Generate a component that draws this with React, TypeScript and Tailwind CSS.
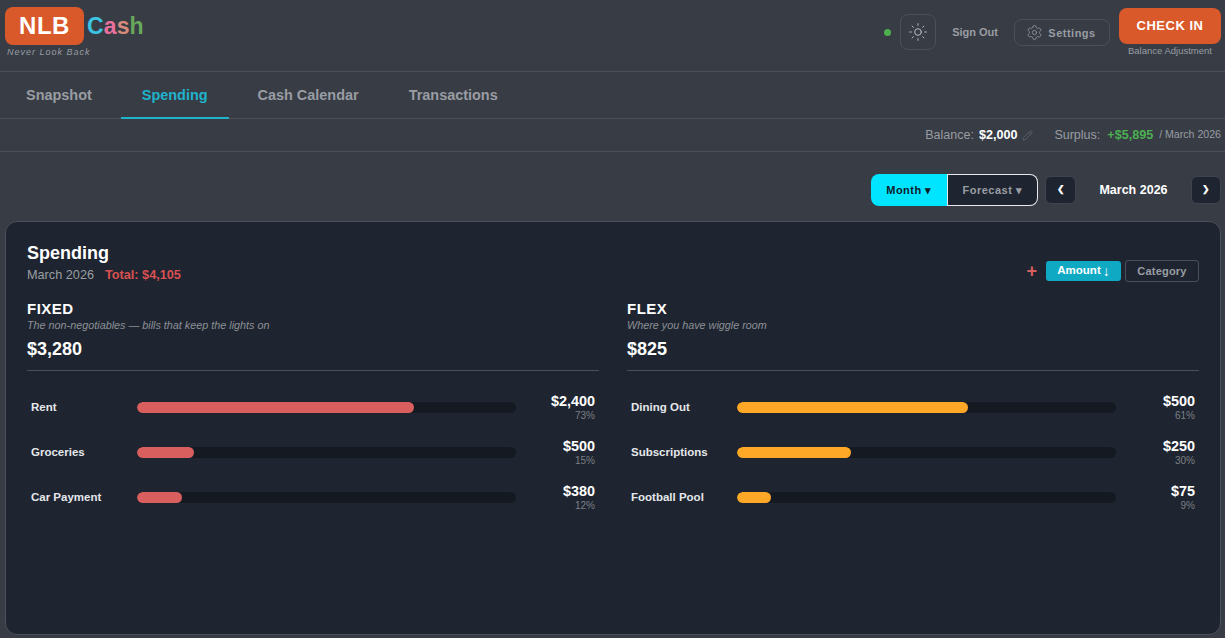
import { Pencil, Settings, Sun } from "lucide-react";

const tabs = ["Snapshot", "Spending", "Cash Calendar", "Transactions"];

const groups = [
  {
    title: "FIXED",
    note: "The non-negotiables — bills that keep the lights on",
    total: "$3,280",
    color: "bg-[#d95f5f]",
    rows: [
      { name: "Rent", amount: "$2,400", pct: 73 },
      { name: "Groceries", amount: "$500", pct: 15 },
      { name: "Car Payment", amount: "$380", pct: 12 },
    ],
  },
  {
    title: "FLEX",
    note: "Where you have wiggle room",
    total: "$825",
    color: "bg-[#ffa726]",
    rows: [
      { name: "Dining Out", amount: "$500", pct: 61 },
      { name: "Subscriptions", amount: "$250", pct: 30 },
      { name: "Football Pool", amount: "$75", pct: 9 },
    ],
  },
];

function Header() {
  return (
    <div className="flex h-[72px] items-start justify-between border-b border-[#4b505a] pl-[5px] pr-1">
      <div className="pt-[7px]">
        <div className="flex items-center gap-[3px]">
          <div className="flex h-[38px] w-[79px] items-center justify-center rounded-lg bg-[#d9592a] text-[24px] font-bold tracking-[0.5px] text-white">
            NLB
          </div>
          <div className="text-[23px] font-bold leading-none tracking-[0.1px]">
            <span className="text-[#3cc4e4]">C</span>
            <span className="text-[#e8709c]">a</span>
            <span className="text-[#d58a7c]">s</span>
            <span className="text-[#68a85a]">h</span>
          </div>
        </div>
        <div className="ml-[2px] mt-[1px] text-[9px] italic leading-[12px] tracking-[1px] text-[#9a9da3]">Never Look Back</div>
      </div>
      <div className="flex items-start pt-2">
        <div className="mt-[21px] h-[7px] w-[7px] rounded-full bg-[#4caf50]" />
        <button className="ml-[9px] mt-[6px] flex h-9 w-9 items-center justify-center rounded-lg border border-[#4b505a] text-[#c4c8cf]">
          <Sun size={20} strokeWidth={1.1} />
        </button>
        <div className="ml-[16px] mt-[18px] text-[11px] font-bold leading-[12px] text-[#9a9da3]">Sign Out</div>
        <button className="ml-[16px] mt-[11px] flex h-[27px] w-[96px] items-center justify-center gap-[5px] rounded-lg border border-[#4b505a] pr-[2px] pt-[1px] text-[11px] font-bold tracking-[0.5px] text-[#9a9da3]">
          <Settings size={17} strokeWidth={1.1} className="-mt-[1px]" />
          Settings
        </button>
        <div className="ml-[9px] flex w-[102px] flex-col items-center">
          <button className="h-9 w-full rounded-lg bg-[#d9592a] text-[13px] font-bold tracking-[0.5px] text-white">CHECK IN</button>
          <div className="mt-[1px] text-[9.5px] leading-[12px] text-[#9a9da3]">Balance Adjustment</div>
        </div>
      </div>
    </div>
  );
}

function Tabs() {
  return (
    <div className="flex h-[47px] gap-2 border-b border-[#4b505a] pl-[5px]">
      {tabs.map((t) => (
        <div
          key={t}
          className={
            t === "Spending"
              ? "flex h-[47px] items-center border-b-2 border-[#1fb3cc] px-[21px] pt-[3px] text-[14.45px] font-bold text-[#1fb3cc]"
              : "flex h-[46px] items-center px-[21px] pt-[2px] text-[14.45px] font-bold text-[#9a9da3]"
          }
        >
          {t}
        </div>
      ))}
    </div>
  );
}

function StatBar() {
  return (
    <div className="flex h-[33px] items-center justify-end border-b border-[#4b505a] pr-1 text-[12.5px] text-[#9a9da3]">
      <span>Balance:</span>
      <span className="ml-[5px] text-[12.6px] font-bold text-white">$2,000</span>
      <Pencil size={11} strokeWidth={1} className="ml-[5px] text-[#7c828c]" />
      <span className="ml-[21px]">Surplus:</span>
      <span className="ml-[7px] text-[12.6px] font-bold text-[#4caf50]">+$5,895</span>
      <span className="ml-[6px] text-[10.6px]">/ March 2026</span>
    </div>
  );
}

function Toolbar() {
  return (
    <div className="flex items-center justify-end pr-1 pt-[22px]">
      <div className="flex h-[32px] w-[167px] text-[11px] font-bold tracking-[0.5px]">
        <div className="flex w-[76px] items-center justify-center rounded-l-lg bg-[#00e5ff] text-[#101a2a]">Month ▾</div>
        <div className="flex flex-1 items-center justify-center rounded-r-lg border border-white/90 bg-[#1e2530] text-[#9a9da3]">Forecast ▾</div>
      </div>
      <button className="ml-[7px] flex h-[28px] w-[31px] items-center justify-center rounded-md border border-[#3f444e] bg-[#1e2530] text-[9px] font-bold text-white">❮</button>
      <div className="w-[115px] text-center text-[12.5px] font-bold text-white">March 2026</div>
      <button className="flex h-[28px] w-[30px] items-center justify-center rounded-md border border-[#3f444e] bg-[#1e2530] text-[9px] font-bold text-white">❯</button>
    </div>
  );
}

function Group({ g }: { g: (typeof groups)[number] }) {
  return (
    <div>
      <div className="text-[15px] font-bold leading-[18px] tracking-[0.5px] text-white">{g.title}</div>
      <div className="text-[10.8px] italic leading-[15px] text-[#8d9096]">{g.note}</div>
      <div className="mt-[4px] border-b border-[#4b505a] pb-[9px] text-[18px] font-bold leading-[24px] text-white">{g.total}</div>
      <div className="pt-[14px]">
        {g.rows.map((r) => (
          <div key={r.name} className="flex h-[45px] items-center px-1">
            <div className="w-[106px] text-[11.5px] font-bold text-[#e5e7eb]">{r.name}</div>
            <div className="h-[11px] w-[379px] overflow-hidden rounded-full bg-[#151a22]">
              <div className={"h-full rounded-full " + g.color} style={{ width: r.pct + "%" }} />
            </div>
            <div className="flex-1 text-right">
              <div className="text-[14.4px] font-bold leading-[15px] text-white">{r.amount}</div>
              <div className="mt-[2px] text-[10px] leading-[10px] text-[#7c7f85]">{r.pct}%</div>
            </div>
          </div>
        ))}
      </div>
    </div>
  );
}

function SpendingCard() {
  return (
    <div className="ml-[5px] mr-1 mt-[15px] h-[414px] rounded-xl border border-[#4b505a] bg-[#1e2530] px-[21px] pt-[19px]">
      <div className="flex items-start justify-between">
        <div>
          <div className="text-lg font-bold leading-[24px] text-white">Spending</div>
          <div className="mt-[2px] text-[12.7px] leading-[16px] text-[#9a9da3]">
            March 2026<span className="ml-[11px] font-bold text-[#d95050]">Total: $4,105</span>
          </div>
        </div>
        <div className="mt-[19px] flex items-center">
          <span className="text-[18px] font-bold leading-[20px] text-[#d95f5f]">+</span>
          <button className="ml-[9px] flex h-[20px] w-[75px] items-center justify-center gap-[2px] rounded-[3px] bg-[#0fa9c4] text-[11.5px] font-bold text-white">
            Amount <span className="text-[14px] font-normal leading-none">↓</span>
          </button>
          <button className="ml-[4px] h-[22px] w-[74px] rounded-[3px] border border-[#4b505a] text-[11px] font-bold tracking-[0.2px] text-[#9a9da3]">Category</button>
        </div>
      </div>
      <div className="mt-[17px] grid grid-cols-2 gap-[28px]">
        {groups.map((g) => (
          <Group key={g.title} g={g} />
        ))}
      </div>
    </div>
  );
}

export default function App() {
  return (
    <div className="h-[638px] overflow-hidden bg-[#373c45] font-['Liberation_Sans',Arial,sans-serif]">
      <Header />
      <Tabs />
      <StatBar />
      <Toolbar />
      <SpendingCard />
    </div>
  );
}
